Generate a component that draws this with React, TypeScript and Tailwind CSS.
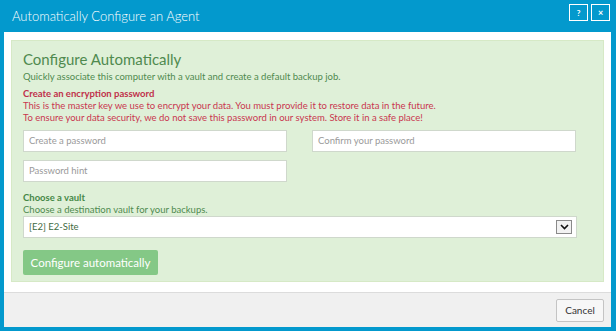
import React from 'react'

const font = { fontFamily: 'Lato, "Open Sans", sans-serif' }

function TextBox({ placeholder }: { placeholder: string }) {
  return (
    <div className="flex h-[22px] w-[264px] items-center border border-[#cfd8cc] bg-white pl-[5px] text-[9.5px] text-[#9a9a9a]">
      {placeholder}
    </div>
  )
}

export default function App() {
  return (
    <div style={font} className="flex h-[331px] w-[616px] flex-col bg-[#0399cd]">
      {/* title bar */}
      <div className="flex h-[32px] shrink-0 items-start justify-between pl-[12px] pr-[6px]">
        <h1 className="mt-[8px] text-[13px] leading-[16px] font-light text-white">
          Automatically Configure an Agent
        </h1>
        <div className="mt-[4px] flex gap-[3px]">
          <span className="flex h-[17px] w-[19px] items-center justify-center border border-white text-[8px] font-bold text-white">
            ?
          </span>
          <span className="flex h-[17px] w-[19px] items-center justify-center border border-white text-[9px] font-bold text-white">
            ×
          </span>
        </div>
      </div>

      {/* body */}
      <div className="mb-[4px] ml-[4px] mr-[5px] flex flex-1 flex-col bg-white">
        <div className="px-[7px] pt-[8px] pb-[10px]">
          {/* green panel */}
          <div className="h-[242px] border border-[#d6e9c6] bg-[#dff0d8] px-[11px] pt-[8px]">
            <h2 className="text-[15px] leading-[20px] text-[#4f8a4f]">Configure Automatically</h2>
            <p className="mt-[2px] text-[9.5px] leading-[12px] text-[#4f8a4f]">
              Quickly associate this computer with a vault and create a default backup job.
            </p>

            <p className="mt-[5px] text-[9.5px] leading-[12px] font-bold text-[#c0304a]">
              Create an encryption password
            </p>
            <p className="text-[9.5px] leading-[12px] text-[#c9364f]">
              This is the master key we use to encrypt your data. You must provide it to restore data in the future.
            </p>
            <p className="text-[9.5px] leading-[12px] text-[#c9364f]">
              To ensure your data security, we do not save this password in our system. Store it in a safe place!
            </p>

            <div className="mt-[6px] flex gap-[25px]">
              <TextBox placeholder="Create a password" />
              <TextBox placeholder="Confirm your password" />
            </div>
            <div className="mt-[8px]">
              <TextBox placeholder="Password hint" />
            </div>

            <p className="mt-[10px] text-[9.5px] leading-[12px] font-bold text-[#468847]">Choose a vault</p>
            <p className="text-[9.5px] leading-[12px] text-[#4f8a4f]">Choose a destination vault for your backups.</p>

            {/* select */}
            <div className="flex h-[22px] w-[554px] items-center justify-between border border-[#cfd8cc] bg-white pl-[5px] pr-[4px] text-[9.5px] text-[#3f6a3f]">
              <span>[E2] E2-Site</span>
              <span className="flex h-[14px] w-[16px] items-center justify-center border border-[#8a8a8a] bg-[#f2f2f2]">
                <svg width="9" height="6" viewBox="0 0 9 6">
                  <path d="M1 1l3.5 3.5L8 1" fill="none" stroke="#111" strokeWidth="1.6" />
                </svg>
              </span>
            </div>

            <button className="mt-[12px] flex h-[25px] w-[135px] items-center justify-center rounded-[2px] bg-[#84c886] text-[11.5px] text-white">
              Configure automatically
            </button>
          </div>
        </div>

        {/* footer */}
        <div className="flex flex-1 items-center justify-end border-t border-[#dcdcdc] bg-[#f0f0f0] pr-[7px]">
          <button className="flex h-[23px] w-[48px] items-center justify-center rounded-[2px] border border-[#c4c4c4] bg-[#f7f7f7] text-[10px] text-[#333]">
            Cancel
          </button>
        </div>
      </div>
    </div>
  )
}
